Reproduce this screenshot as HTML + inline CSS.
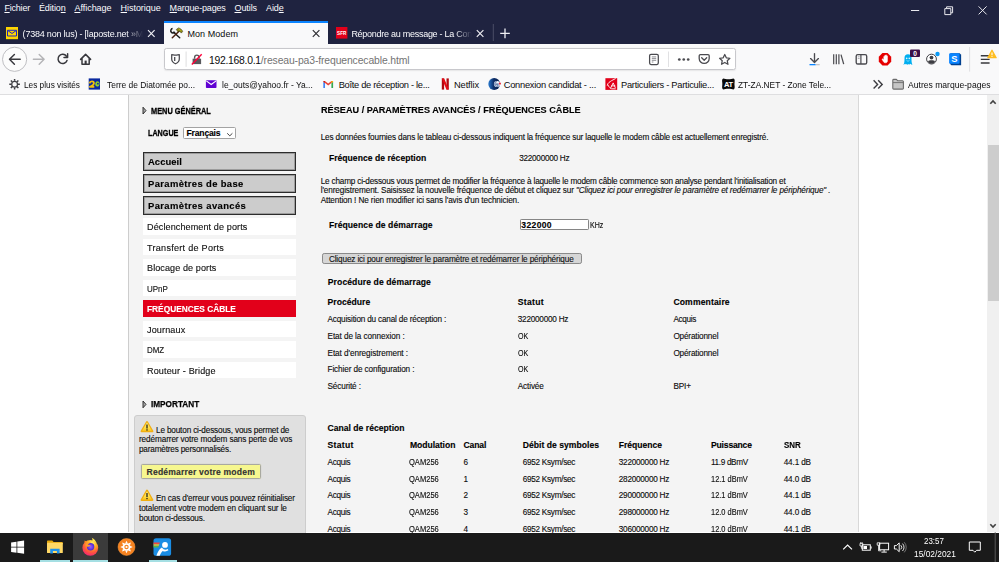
<!DOCTYPE html>
<html lang="fr">
<head>
<meta charset="utf-8">
<title>Mon Modem</title>
<style>
html,body{margin:0;padding:0;}
body{width:999px;height:562px;overflow:hidden;position:relative;background:#fff;font-family:"Liberation Sans",sans-serif;}
.a{position:absolute;}
.t{position:absolute;white-space:pre;z-index:5;}
.p{-webkit-text-stroke:.12px currentColor;}
.t u{text-decoration-thickness:.8px;text-underline-offset:1px;}
svg{position:absolute;overflow:visible;}
#chrome-top{left:0;top:0;width:999px;height:44.6px;background:#1f2340;box-sizing:border-box;border-bottom:1.8px solid #13152b;}
#tab-active{left:164px;top:21px;width:164.2px;height:24px;background:#f9f9fa;}
#tab-line{left:164px;top:21px;width:164px;height:2px;background:#0a84ff;}
#navbar{left:0;top:44px;width:999px;height:31px;background:#f9f9fa;}
#bookbar{left:0;top:75px;width:999px;height:19.2px;background:#f9f9fa;border-bottom:1px solid #dedee0;}
#urlbar{left:164.2px;top:48.3px;width:571.4px;height:22px;background:#fff;border:1.1px solid #c8c8cc;border-radius:2.5px;box-sizing:border-box;box-shadow:0 .5px 1.5px rgba(0,0,0,.08);}
#page{left:0;top:95px;width:987px;height:437px;background:#fff;overflow:hidden;}
#panel{left:128px;top:-2px;width:729px;height:460px;background:#f4f4f4;border-left:1.3px solid #cdcdcd;border-right:1.6px solid #d8d8d8;}
.mbtn{left:143px;width:153px;height:18.5px;box-sizing:border-box;background:#ccc;border:1.4px solid #2c2c2c;box-shadow:inset 0 0 0 .7px #8c8c8c;}
.mit{left:143.3px;width:152.9px;height:16.6px;background:#fff;}
#sel{left:183px;top:127.4px;width:53.4px;height:11.6px;box-sizing:border-box;background:#fff;border:1px solid #a3a3a3;border-radius:1.5px;}
#info{left:134px;top:415px;width:171.5px;height:140px;box-sizing:border-box;background:#e0e0e0;border:1px solid #cdcdcd;border-radius:3px;}
#rbtn{left:140.8px;top:464px;width:120px;height:15.4px;box-sizing:border-box;background:#f6f78f;border:1px solid #a9a9a0;border-radius:1.5px;box-shadow:0 0 0 .5px #d6d6cf;}
#inp{left:520px;top:218.8px;width:69.4px;height:10.8px;box-sizing:border-box;background:#fff;border:1px solid #858585;border-radius:1.2px;}
#sbtn{left:321.6px;top:253.2px;width:260px;height:10.6px;box-sizing:border-box;background:#d6d6d6;border:1px solid #8a8a8a;border-radius:2.2px;}
#sb{left:987px;top:95px;width:12px;height:437px;background:#f0f0f0;}
#sbth{left:987.8px;top:145px;width:11.2px;height:155.5px;background:#cdcdcd;}
#taskbar{left:0;top:532.5px;width:999px;height:29.5px;background:#1a1a1a;z-index:10;}
.ul{height:2.2px;top:27.8px;background:#a5dfe3;}
</style>
</head>
<body>
<!-- ======= Firefox chrome ======= -->
<div id="chrome-top" class="a"></div>
<div id="tab-active" class="a"></div>
<div id="tab-line" class="a"></div>
<div id="navbar" class="a"></div>
<div id="bookbar" class="a"></div>
<div id="urlbar" class="a"></div>
<!--ICONS-CHROME-->
<!-- window controls -->
<svg style="left:905px;top:0" width="94" height="21" viewBox="0 0 94 21">
  <path d="M6 10.5h8.2" stroke="#e9e9ee" stroke-width="1" fill="none"/>
  <path d="M39.8 8.6h6v6h-6z M41.6 8.6v-1.8h6v6h-1.8" stroke="#e9e9ee" stroke-width="1" fill="none"/>
  <path d="M73.6 6.4l8 8M81.6 6.4l-8 8" stroke="#e9e9ee" stroke-width="1" fill="none"/>
</svg>
<!-- tab 1 favicon: La Poste -->
<svg style="left:6.3px;top:26.9px" width="12" height="12.2" viewBox="0 0 12 12.2">
  <rect width="12" height="12.2" fill="#ffd600"/>
  <path d="M1.500 3.300h9v5.700h-9z" fill="none" stroke="#1a23c8" stroke-width="1" stroke-linejoin="round"/>
  <path d="M1.700 3.500L6 6.500l4.300-3" fill="none" stroke="#1a23c8" stroke-width="1"/>
</svg>
<!-- tab close / new tab -->
<svg style="left:0;top:21px" width="520" height="23" viewBox="0 0 520 23">
  <path d="M148 9.2l6.6 6.6M154.6 9.2l-6.6 6.6" stroke="#f0f0f4" stroke-width="1.15" fill="none"/>
  <path d="M312.8 9.2l6.6 6.6M319.4 9.2l-6.6 6.6" stroke="#2b2b30" stroke-width="1.15" fill="none"/>
  <path d="M476.8 9.2l6.6 6.6M483.4 9.2l-6.6 6.6" stroke="#f0f0f4" stroke-width="1.15" fill="none"/>
  <path d="M493.3 3v17" stroke="#4a4d66" stroke-width="1"/>
  <path d="M500.2 12.4h9.6M505 7.6v9.6" stroke="#f0f0f4" stroke-width="1.3" fill="none"/>
</svg>
<!-- tab 2 favicon: hammer + wrench -->
<svg style="left:170px;top:27.4px" width="14" height="12" viewBox="0 0 14 12">
  <path d="M3.6 5.200L9.700 10.700" stroke="#1b1b1b" stroke-width="1.500" stroke-linecap="round"/>
  <path d="M2.600 1.600a2.200 2.200 0 1 0 2.300 3.200" fill="none" stroke="#1b1b1b" stroke-width="1.500"/>
  <path d="M2.300 10.700L9 4.200" stroke="#4a2010" stroke-width="1.500" stroke-linecap="round"/>
  <path d="M6.300 2.500l2.200-1.600c1.800.5 3.400 1.700 4.200 3.400l-1.300 1.800l-1.900-1.900l-1.700.4z" fill="#8d8a14" stroke="#2e2c06" stroke-width=".55" stroke-linejoin="round"/>
  <path d="M8.600 1.900c1.200.5 2.100 1.200 2.800 2.100" stroke="#d2cc20" stroke-width=".7" fill="none"/>
</svg>
<!-- tab 3 favicon: SFR -->
<svg style="left:336px;top:27px" width="11.4" height="11.6" viewBox="0 0 11.4 11.6">
  <rect width="11.4" height="11.6" fill="#e2001a"/>
  <text x="5.7" y="7.6" font-family="Liberation Sans, sans-serif" font-size="4.6" font-weight="700" fill="#fff" text-anchor="middle">SFR</text>
</svg>
<!-- nav buttons -->
<svg style="left:0;top:44px" width="100" height="31" viewBox="0 0 100 31">
  <circle cx="14.6" cy="15.3" r="12.1" fill="#fcfcfc" stroke="#bfbfc3" stroke-width="1"/>
  <path d="M20.2 15.3H9.6M14.4 10.4l-4.9 4.9 4.9 4.9" fill="none" stroke="#38383d" stroke-width="1.45" stroke-linecap="round" stroke-linejoin="round"/>
  <path d="M33.4 15.3h10.4M39.2 10.4l4.9 4.9-4.9 4.9" fill="none" stroke="#b4b4b7" stroke-width="1.45" stroke-linecap="round" stroke-linejoin="round"/>
  <path d="M66.4 12.2a4.6 4.6 0 1 0 .6 4.3" fill="none" stroke="#38383d" stroke-width="1.5" stroke-linecap="round"/>
  <path d="M67.6 9.8v3.6h-3.6" fill="none" stroke="#38383d" stroke-width="1.5" stroke-linejoin="round" stroke-linecap="round"/>
  <path d="M80.6 15.4l5-5 5 5M82 14.6v5.6h7.2v-5.6" fill="none" stroke="#38383d" stroke-width="1.5" stroke-linejoin="round" stroke-linecap="round"/>
  <rect x="84.6" y="16.6" width="2.1" height="3.4" fill="#38383d"/>
</svg>
<!-- url bar left icons -->
<svg style="left:164px;top:44px" width="50" height="31" viewBox="0 0 50 31">
  <path d="M11.500 11.200c1.500 0 2.700-.5 3.800-.5v4.300c0 2.300-1.600 3.800-3.800 4.800c-2.200-1-3.800-2.500-3.800-4.800v-4.300c1.100 0 2.300.5 3.800.5z" fill="none" stroke="#4a4a4f" stroke-width="1.250" stroke-linejoin="round"/>
  <path d="M10.700 12.900v4.100" stroke="#4a4a4f" stroke-width="1.300"/>
  <path d="M22.100 7.500v15.300" stroke="#dededf" stroke-width="1"/>
  <path d="M28.600 20.100v-5.400h8.500v5.400z" fill="#58585c"/>
  <path d="M30.600 14.800v-1.400a2.250 2.250 0 0 1 4.500 0v1.400" fill="none" stroke="#58585c" stroke-width="1.400"/>
  <path d="M27.800 20.500l9.900-10.300" stroke="#ff0039" stroke-width="1.400"/>
</svg>
<!-- url bar right icons -->
<svg style="left:640px;top:44px" width="100" height="31" viewBox="0 0 100 31">
  <rect x="9.600" y="10.300" width="8.700" height="10.200" rx="1.400" fill="none" stroke="#4a4a4f" stroke-width="1.250"/>
  <path d="M11.800 12.900h4.400M11.800 14.600h4.400M11.800 16.300h4.400M11.800 18h1.600" stroke="#8f8f94" stroke-width="1" fill="none"/>
  <path d="M28.500 7.500v15.500" stroke="#e1e1e3" stroke-width="1"/>
  <circle cx="39.300" cy="15.500" r="1.350" fill="#4a4a4f"/><circle cx="43.750" cy="15.500" r="1.350" fill="#4a4a4f"/><circle cx="48.200" cy="15.500" r="1.350" fill="#4a4a4f"/>
  <path d="M59.200 11.800a1.200 1.200 0 0 1 1.200-1.200h7.600a1.200 1.200 0 0 1 1.200 1.200v2.600a5 5 0 0 1-10 0z" fill="none" stroke="#4a4a4f" stroke-width="1.300"/>
  <path d="M61.700 13.800l2.500 2.400 2.500-2.400" fill="none" stroke="#4a4a4f" stroke-width="1.300" stroke-linecap="round" stroke-linejoin="round"/>
  <path d="M84.750 10.500l1.550 3.300 3.600.45-2.650 2.450.7 3.600-3.200-1.800-3.200 1.800.7-3.600-2.650-2.450 3.600-.45z" fill="none" stroke="#4a4a4f" stroke-width="1.250" stroke-linejoin="round"/>
</svg>
<!-- toolbar right icons -->
<svg style="left:800px;top:44px" width="199" height="31" viewBox="0 0 199 31">
  <!-- download -->
  <path d="M14.500 9.600v8.600M10.600 14.600l3.900 3.900 3.900-3.900" fill="none" stroke="#4a4a4f" stroke-width="1.350" stroke-linecap="round" stroke-linejoin="round"/>
  <rect x="9.500" y="20" width="6.200" height="1.300" fill="#0a84ff"/><rect x="15.700" y="20" width="4" height="1.300" fill="#c4c4c7"/>
  <!-- library -->
  <path d="M33.700 10.200v10M36.300 10.200v10M38.900 10.200v10" stroke="#4a4a4f" stroke-width="1.200" fill="none"/>
  <path d="M41 10.600l2.700 9.500" stroke="#4a4a4f" stroke-width="1.250" fill="none"/>
  <!-- sidebar -->
  <rect x="56.200" y="10.600" width="10.500" height="9.400" rx="1.600" fill="none" stroke="#4a4a4f" stroke-width="1.350"/>
  <path d="M60.900 10.600v9.400" stroke="#4a4a4f" stroke-width="1.200"/>
  <path d="M57.800 12.800h1.800M57.800 14.500h1.800" stroke="#9a9a9f" stroke-width=".8"/>
  <!-- adblock hand -->
  <path d="M82.430 9.050h5.140l3.630 3.630v5.140l-3.630 3.630h-5.140l-3.630-3.630v-5.140z" fill="#e60000"/>
  <g transform="translate(85.200 15.500) scale(.86) translate(-84.300 -15.800)">
  <path d="M82.600 16.200v-3.700a.55.55 0 0 1 1.100 0v2.300v-3.400a.55.55 0 0 1 1.100 0v3.200v-3.700a.55.55 0 0 1 1.100 0v3.800v-2.800a.55.55 0 0 1 1.100 0v5.300c0 1.500-1 2.500-2.500 2.500c-1.200 0-1.800-.5-2.400-1.500l-1.400-2.500c-.3-.6.600-1 1-.5z" fill="#fff" stroke="#fff" stroke-width=".5"/>
  </g>
  <!-- ghostery -->
  <path d="M103.500 20.500c.900-1.200 1-3 1-6.800a3.500 3.500 0 0 1 7 0c0 3.800.100 5.600 1 6.800c-.900.400-1.600-.100-2.100-.700c-.400.700-1.200 1-1.800.300c-.400.700-1.300.700-1.700 0c-.600.700-1.400.400-1.800-.300c-.500.600-1.200 1.100-2.100.700z" fill="#00aef0"/>
  <circle cx="106.700" cy="14.400" r=".8" fill="#d9f3fd"/><circle cx="109.300" cy="14.400" r=".8" fill="#d9f3fd"/>
  <path d="M106.600 16.600c.8.600 2 .6 2.800 0" stroke="#d9f3fd" stroke-width=".6" fill="none"/>
  <rect x="110" y="5.500" width="10" height="7.400" rx="1" fill="#3b1049"/>
  <text x="115" y="11.500" font-family="Liberation Sans, sans-serif" font-size="6.600" font-weight="700" fill="#fff" text-anchor="middle">0</text>
  <!-- profile -->
  <circle cx="131.500" cy="15.100" r="4.900" fill="#fff" stroke="#3d3d42" stroke-width="1"/>
  <circle cx="131.500" cy="13.600" r="1.900" fill="#3d3d42"/>
  <path d="M128 17.400a3.800 3.800 0 0 0 7 0c-.6-1-1.800-1.200-3.500-1.200s-2.900.2-3.500 1.200z" fill="#3d3d42"/>
  <circle cx="137.500" cy="10" r="2.200" fill="#0a9af5"/>
  <!-- S app -->
  <path d="M150.400 9.300h9.200l1.500 1.500v10.400h-9.700l-1.500-1.500z" fill="#00408f"/>
  <rect x="149.100" y="9.200" width="10.500" height="10.500" rx="1.200" fill="#0a84ff"/>
  <text x="154.400" y="17.700" font-family="Liberation Sans, sans-serif" font-size="9.400" font-weight="700" fill="#fff" text-anchor="middle">S</text>
  <!-- separator -->
  <path d="M169.600 3v24.600" stroke="#dcdce0" stroke-width=".9"/>
  <!-- hamburger -->
  <path d="M180.800 11.700h8.800M180.800 15.350h8.800M180.800 19h8.800" stroke="#38383d" stroke-width="1.350"/>
  <!-- warning -->
  <path d="M192 6.200l4.200 7.500h-8.400z" fill="#ffbd1f" stroke="#ffbd1f" stroke-width="1.200" stroke-linejoin="round"/>
  <path d="M192 8.400v2.900" stroke="#fff" stroke-width="1.100"/><circle cx="192" cy="12.500" r=".6" fill="#fff"/>
</svg>
<!--/ICONS-CHROME-->

<!-- ======= Page ======= -->
<div id="page" class="a">
  <div id="panel" class="a"></div>
</div>
<div id="sel" class="a"></div>
<div class="a mbtn" style="top:152px"></div>
<div class="a mbtn" style="top:174px"></div>
<div class="a mbtn" style="top:196px"></div>
<div class="a mit" style="top:218px"></div>
<div class="a mit" style="top:238.5px"></div>
<div class="a mit" style="top:259px"></div>
<div class="a mit" style="top:279.5px"></div>
<div class="a mit" style="top:300px;background:#e2001a"></div>
<div class="a mit" style="top:320.5px"></div>
<div class="a mit" style="top:341px"></div>
<div class="a mit" style="top:361.5px"></div>
<div id="info" class="a"></div>
<div id="rbtn" class="a"></div>
<div id="inp" class="a"></div>
<div id="sbtn" class="a"></div>
<div id="sb" class="a"></div>
<div id="sbth" class="a"></div>
<!--ICONS-PAGE-->
<!-- bookmarks bar icons -->
<svg style="left:0;top:75px" width="999" height="19" viewBox="0 0 999 19">
  <!-- gear -->
  <g transform="translate(14.600 9.200)" stroke="#3d3d42" fill="none">
    <circle r="2.900" stroke-width="1.250"/>
    <path d="M0-3.400V-5.300M0 3.400V5.300M-3.400 0H-5.300M3.400 0H5.300M-2.400-2.400L-3.750-3.750M2.400-2.400L3.750-3.750M-2.400 2.400L-3.750 3.750M2.400 2.400L3.750 3.750" stroke-width="1.500"/>
  </g>
  <!-- "20" icon -->
  <rect x="88.700" y="3.400" width="11.300" height="11.200" fill="#0b2aa0"/>
  <path d="M89.600 8.300c.4-2.500 4.300-2.700 4.300-.1c0 1.900-2.200 2.500-3.900 3.700h4.300" fill="none" stroke="#f4c20a" stroke-width="1.900" stroke-linejoin="round"/>
  <path d="M97.400 6.200c1.500 0 2.100 1.400 2.100 2.700s-.9 2.700-2.300 2.700s-2-1.300-2-2.600s.8-2.800 2.200-2.800z" fill="#8fd128"/>
  <circle cx="97.900" cy="8.700" r=".9" fill="#0b2aa0"/>
  <!-- yahoo mail -->
  <rect x="205.900" y="5.300" width="10.600" height="7.700" rx=".8" fill="#6001d2"/>
  <path d="M206.300 5.900l4.900 3.600 4.900-3.600" fill="none" stroke="#fff" stroke-width="1.100"/>
  <!-- gmail -->
  <path d="M323.300 13v-6.200l1.700 1.300V13z" fill="#4285f4"/>
  <path d="M333.100 13v-6.200l-1.700 1.300V13z" fill="#34a853"/>
  <path d="M323.300 6.800c0-.8 1-1.200 1.600-.7l3.300 2.500 3.300-2.500c.6-.5 1.600-.1 1.600.7l-1.700 1.300-3.200 2.400-3.200-2.400z" fill="#ea4335"/>
  <path d="M331.400 8.100l1.700-1.300c0-.8-1-1.200-1.600-.7l-.1.100z" fill="#fbbc04"/>
  <path d="M325 8.100l-1.700-1.300c0-.8 1-1.200 1.600-.7l.1.100z" fill="#c5221f"/>
  <!-- netflix -->
  <path d="M441.800 3.400h2.300v11.200h-2.300z" fill="#b1060f"/>
  <path d="M446.500 3.400h2.300v11.200h-2.300z" fill="#b1060f"/>
  <path d="M441.800 3.400h2.400l4.600 11.200h-2.400z" fill="#e50914"/>
  <!-- pole emploi -->
  <defs><linearGradient id="pe" x1="0" y1="0" x2="1" y2="0"><stop offset="0" stop-color="#2a7bd0"/><stop offset=".45" stop-color="#0e2f6a"/><stop offset="1" stop-color="#0a1f4a"/></linearGradient></defs>
  <circle cx="494.200" cy="9" r="5.900" fill="url(#pe)"/>
  <circle cx="497" cy="9" r="3.100" fill="#f4f6fb"/>
  <path d="M495.300 9.100h3.400M496.800 11h1.800" stroke="#143a80" stroke-width="1"/>
  <path d="M497 6.600a2.400 2.400 0 0 0 0 4.800" stroke="#143a80" stroke-width=".6" fill="none"/>
  <circle cx="499.900" cy="8.600" r="1.100" fill="#e8283c"/>
  <!-- caisse d'epargne -->
  <rect x="605.400" y="3.200" width="11.800" height="11.700" fill="#e2001a"/>
  <path d="M607.300 10.200c.4-2.600 2.600-3.300 4.200-4.500l3.800-2M608 10.200c.8 1.800 2.200 3 3.600 3.600h3.700M610.600 13.100l2.600-5.200 2 4.600M611.600 10.900h3.300" fill="none" stroke="#fff" stroke-width=".9" stroke-linecap="round"/>
  <!-- ZT -->
  <path d="M723.400 3.600c2 1 8 1 10 0c1.400.2 1.400 2.200 1.200 3.400c-.2 1.300-.2 2.700 0 4c.2 1.200.2 3.200-1.200 3.400c-2-1-8-1-10 0c-1.400-.2-1.400-2.200-1.200-3.400c.2-1.300.2-2.700 0-4c-.2-1.200-.2-3.200 1.200-3.400z" fill="#0a0a0a"/>
  <text x="728.400" y="12" font-family="Liberation Sans, sans-serif" font-size="7.600" font-weight="700" fill="#fff" text-anchor="middle" letter-spacing="-.5">AT</text>
  <!-- chevrons -->
  <path d="M873.600 5.300l4 4.100-4 4.100M878.200 5.300l4 4.100-4 4.100" fill="none" stroke="#3d3d42" stroke-width="1.400"/>
  <!-- folder -->
  <path d="M892.800 5.300a.9.900 0 0 1 .9-.9h2.700l1.400 1.400h4.700a.9.900 0 0 1 .9.900v6.500a.9.900 0 0 1-.9.900h-8.800a.9.900 0 0 1-.9-.9z" fill="#c6c6c6" stroke="#6b6b6b" stroke-width="1.100" stroke-linejoin="round"/>
  <path d="M893 7.600h10.200" stroke="#6b6b6b" stroke-width=".9"/>
</svg>
<!-- page icons -->
<svg style="left:0;top:95px" width="999" height="437" viewBox="0 0 999 437">
  <!-- section triangles -->
  <path d="M143 12.200l3 3.400-3 3.400z" fill="#aaa" stroke="#222" stroke-width=".9" stroke-linejoin="round"/>
  <path d="M143 306l3 3.400-3 3.400z" fill="#aaa" stroke="#222" stroke-width=".9" stroke-linejoin="round"/>
  <!-- select chevron -->
  <path d="M227.200 38.300l2.600 2.500 2.600-2.500" fill="none" stroke="#444" stroke-width="1"/>
  <!-- scrollbar arrows -->
  <path d="M990.300 8.700l2.700-2.800 2.700 2.800" fill="none" stroke="#404040" stroke-width="1.600"/>
  <path d="M990.300 429.200l2.700 2.800 2.700-2.800" fill="none" stroke="#404040" stroke-width="1.600"/>
  <!-- warning icons -->
  <defs><linearGradient id="wg" x1="0" y1="0" x2="0" y2="1"><stop offset="0" stop-color="#fff48a"/><stop offset=".6" stop-color="#ffe04a"/><stop offset="1" stop-color="#f9c21a"/></linearGradient></defs>
  <g>
    <path d="M147 327l5.400 9.300h-10.800z" fill="url(#wg)" stroke="#f0ae12" stroke-width="2" stroke-linejoin="round"/>
    <path d="M147 327.600l4.900 8.500h-9.800z" fill="url(#wg)"/>
    <path d="M147 329.400v4.100" stroke="#1c1c1c" stroke-width="1.250"/><rect x="146.350" y="334.300" width="1.300" height="1.300" fill="#1c1c1c"/>
  </g>
  <g transform="translate(0 68.600)">
    <path d="M147 327l5.400 9.300h-10.800z" fill="url(#wg)" stroke="#f0ae12" stroke-width="2" stroke-linejoin="round"/>
    <path d="M147 327.600l4.900 8.500h-9.800z" fill="url(#wg)"/>
    <path d="M147 329.400v4.100" stroke="#1c1c1c" stroke-width="1.250"/><rect x="146.350" y="334.300" width="1.300" height="1.300" fill="#1c1c1c"/>
  </g>
</svg>
<!--/ICONS-PAGE-->

<span class="t" style="left:4.4px;top:3px;line-height:10px;font-size:9px;color:#fbfbfe;letter-spacing:-0.202px;"><u>F</u>ichier</span>
<span class="t" style="left:39.0px;top:3px;line-height:10px;font-size:9px;color:#fbfbfe;letter-spacing:-0.133px;">Éditio<u>n</u></span>
<span class="t" style="left:74.4px;top:3px;line-height:10px;font-size:9px;color:#fbfbfe;letter-spacing:-0.019px;"><u>A</u>ffichage</span>
<span class="t" style="left:120.6px;top:3px;line-height:10px;font-size:9px;color:#fbfbfe;letter-spacing:-0.053px;"><u>H</u>istorique</span>
<span class="t" style="left:169.6px;top:3px;line-height:10px;font-size:9px;color:#fbfbfe;letter-spacing:-0.162px;"><u>M</u>arque-pages</span>
<span class="t" style="left:234.5px;top:3px;line-height:10px;font-size:9px;color:#fbfbfe;letter-spacing:-0.086px;"><u>O</u>utils</span>
<span class="t" style="left:266.0px;top:3px;line-height:10px;font-size:9px;color:#fbfbfe;letter-spacing:-0.079px;">Aid<u>e</u></span>
<span class="t" style="left:22.6px;top:29px;line-height:10px;font-size:9px;color:#fbfbfe;letter-spacing:-0.209px;-webkit-mask-image:linear-gradient(90deg,#000 86%,transparent 100%);">(7384 non lus) - [laposte.net »M</span>
<span class="t" style="left:187.5px;top:29px;line-height:10px;font-size:9px;color:#0c0c0d;letter-spacing:0.052px;">Mon Modem</span>
<span class="t" style="left:351.4px;top:29px;line-height:10px;font-size:9px;color:#fbfbfe;letter-spacing:-0.268px;-webkit-mask-image:linear-gradient(90deg,#000 86%,transparent 100%);">Répondre au message - La Con</span>
<span class="t" style="left:208.9px;top:55px;line-height:11px;font-size:10.4px;color:#0c0c0d;letter-spacing:-0.273px;">192.168.0.1</span>
<span class="t" style="left:260.8px;top:55px;line-height:11px;font-size:10.4px;color:#737373;letter-spacing:-0.123px;">/reseau-pa3-frequencecable.html</span>
<span class="t" style="left:23.6px;top:80px;line-height:10px;font-size:9.3px;color:#0c0c0d;transform:scaleX(0.8882);transform-origin:0 50%;">Les plus visités</span>
<span class="t" style="left:107.0px;top:80px;line-height:10px;font-size:9.3px;color:#0c0c0d;transform:scaleX(0.9058);transform-origin:0 50%;">Terre de Diatomée po...</span>
<span class="t" style="left:221.7px;top:80px;line-height:10px;font-size:9.3px;color:#0c0c0d;transform:scaleX(0.9121);transform-origin:0 50%;">le_outs@yahoo.fr - Ya...</span>
<span class="t" style="left:338.7px;top:80px;line-height:10px;font-size:9.3px;color:#0c0c0d;letter-spacing:-0.305px;">Boîte de réception - le...</span>
<span class="t" style="left:454.0px;top:80px;line-height:10px;font-size:9.3px;color:#0c0c0d;letter-spacing:-0.121px;">Netflix</span>
<span class="t" style="left:503.7px;top:80px;line-height:10px;font-size:9.3px;color:#0c0c0d;letter-spacing:-0.246px;">Connexion candidat - ...</span>
<span class="t" style="left:621.0px;top:80px;line-height:10px;font-size:9.3px;color:#0c0c0d;letter-spacing:-0.258px;">Particuliers - Particulie...</span>
<span class="t" style="left:738.0px;top:80px;line-height:10px;font-size:9.3px;color:#0c0c0d;transform:scaleX(0.8986);transform-origin:0 50%;">ZT-ZA.NET - Zone Tele...</span>
<span class="t" style="left:907.5px;top:80px;line-height:10px;font-size:9.3px;color:#0c0c0d;transform:scaleX(0.9228);transform-origin:0 50%;">Autres marque-pages</span>
<span class="t p" style="left:151.0px;top:106px;line-height:10px;font-size:8.8px;font-weight:700;transform:scaleX(0.8380);transform-origin:0 50%;-webkit-text-stroke:.3px #000;">MENU GÉNÉRAL</span>
<span class="t p" style="left:148.0px;top:128px;line-height:10px;font-size:8.8px;font-weight:700;transform:scaleX(0.8182);transform-origin:0 50%;-webkit-text-stroke:.3px #000;">LANGUE</span>
<span class="t p" style="left:186.5px;top:128px;line-height:10px;font-size:8.6px;font-weight:700;letter-spacing:-0.182px;">Français</span>
<span class="t p" style="left:147.8px;top:157px;line-height:10px;font-size:8.6px;font-weight:700;letter-spacing:0.021px;transform:scaleX(1.1000);transform-origin:0 50%;">Accueil</span>
<span class="t p" style="left:147.8px;top:179px;line-height:10px;font-size:8.6px;font-weight:700;letter-spacing:0.321px;transform:scaleX(1.1000);transform-origin:0 50%;">Paramètres de base</span>
<span class="t p" style="left:147.8px;top:201px;line-height:10px;font-size:8.6px;font-weight:700;letter-spacing:0.341px;transform:scaleX(1.1000);transform-origin:0 50%;">Paramètres avancés</span>
<span class="t p" style="left:146.6px;top:222px;line-height:10px;font-size:8.4px;color:#111;letter-spacing:0.099px;transform:scaleX(1.0800);transform-origin:0 50%;">Déclenchement de ports</span>
<span class="t p" style="left:146.6px;top:243px;line-height:10px;font-size:8.4px;color:#111;letter-spacing:0.259px;transform:scaleX(1.0800);transform-origin:0 50%;">Transfert de Ports</span>
<span class="t p" style="left:146.6px;top:263px;line-height:10px;font-size:8.4px;color:#111;letter-spacing:0.087px;transform:scaleX(1.0800);transform-origin:0 50%;">Blocage de ports</span>
<span class="t p" style="left:146.6px;top:284px;line-height:10px;font-size:8.4px;color:#111;letter-spacing:0.000px;transform:scaleX(0.9547);transform-origin:0 50%;">UPnP</span>
<span class="t p" style="left:146.6px;top:304px;line-height:10px;font-size:8.4px;font-weight:700;color:#fff;letter-spacing:0.000px;transform:scaleX(0.9950);transform-origin:0 50%;">FRÉQUENCES CÂBLE</span>
<span class="t p" style="left:146.6px;top:325px;line-height:10px;font-size:8.4px;color:#111;letter-spacing:0.138px;transform:scaleX(1.0800);transform-origin:0 50%;">Journaux</span>
<span class="t p" style="left:146.6px;top:345px;line-height:10px;font-size:8.4px;color:#111;letter-spacing:0.000px;transform:scaleX(0.9481);transform-origin:0 50%;">DMZ</span>
<span class="t p" style="left:146.6px;top:366px;line-height:10px;font-size:8.4px;color:#111;letter-spacing:0.135px;transform:scaleX(1.0800);transform-origin:0 50%;">Routeur - Bridge</span>
<span class="t p" style="left:151.0px;top:399px;line-height:10px;font-size:8.8px;font-weight:700;transform:scaleX(0.9334);transform-origin:0 50%;-webkit-text-stroke:.25px #000;">IMPORTANT</span>
<span class="t p" style="left:156.0px;top:426px;line-height:9px;font-size:8.2px;color:#0c0c0c;letter-spacing:-0.154px;">Le bouton ci-dessous, vous permet de</span>
<span class="t p" style="left:139.0px;top:435px;line-height:9px;font-size:8.2px;color:#0c0c0c;letter-spacing:-0.104px;">redémarrer votre modem sans perte de vos</span>
<span class="t p" style="left:139.0px;top:445px;line-height:9px;font-size:8.2px;color:#0c0c0c;letter-spacing:-0.179px;">paramètres personnalisés.</span>
<span class="t p" style="left:146.6px;top:467px;line-height:10px;font-size:8.6px;font-weight:700;color:#333;letter-spacing:0.172px;">Redémarrer votre modem</span>
<span class="t p" style="left:156.0px;top:494px;line-height:9px;font-size:8.2px;color:#0c0c0c;letter-spacing:-0.149px;">En cas d&#x27;erreur vous pouvez réinitialiser</span>
<span class="t p" style="left:139.0px;top:504px;line-height:9px;font-size:8.2px;color:#0c0c0c;letter-spacing:-0.114px;">totalement votre modem en cliquant sur le</span>
<span class="t p" style="left:139.0px;top:514px;line-height:9px;font-size:8.2px;color:#0c0c0c;letter-spacing:-0.163px;">bouton ci-dessous.</span>
<span class="t p" style="left:320.7px;top:105px;line-height:10px;font-size:8.6px;font-weight:700;letter-spacing:0.018px;transform:scaleX(1.0600);transform-origin:0 50%;">RÉSEAU / PARAMÈTRES AVANCÉS / FRÉQUENCES CÂBLE</span>
<span class="t p" style="left:320.7px;top:133px;line-height:9px;font-size:8.2px;color:#0c0c0c;letter-spacing:-0.156px;">Les données fournies dans le tableau ci-dessous indiquent la fréquence sur laquelle le modem câble est actuellement enregistré.</span>
<span class="t p" style="left:328.9px;top:153px;line-height:10px;font-size:8.6px;font-weight:700;letter-spacing:0.020px;">Fréquence de réception</span>
<span class="t p" style="left:519.2px;top:154px;line-height:9px;font-size:8.2px;color:#0c0c0c;letter-spacing:-0.264px;">322000000 Hz</span>
<span class="t p" style="left:320.7px;top:177px;line-height:9px;font-size:8.2px;color:#0c0c0c;letter-spacing:-0.188px;">Le champ ci-dessous vous permet de modifier la fréquence à laquelle le modem câble commence son analyse pendant l&#x27;initialisation et</span>
<span class="t p" style="left:320.7px;top:186px;line-height:9px;font-size:8.2px;color:#0c0c0c;letter-spacing:-0.120px;">l&#x27;enregistrement. Saisissez la nouvelle fréquence de début et cliquez sur </span>
<span class="t p" style="left:576.0px;top:186px;line-height:9px;font-size:8.2px;font-style:italic;color:#0c0c0c;letter-spacing:-0.132px;">&quot;Cliquez ici pour enregistrer le paramètre et redémarrer le périphérique&quot; .</span>
<span class="t p" style="left:320.7px;top:196px;line-height:9px;font-size:8.2px;color:#0c0c0c;letter-spacing:-0.117px;">Attention ! Ne rien modifier ici sans l&#x27;avis d&#x27;un technicien.</span>
<span class="t p" style="left:328.9px;top:220px;line-height:10px;font-size:8.6px;font-weight:700;letter-spacing:0.072px;">Fréquence de démarrage</span>
<span class="t p" style="left:521.3px;top:220px;line-height:10px;font-size:8.6px;font-weight:700;letter-spacing:0.335px;">322000</span>
<span class="t p" style="left:590.3px;top:221px;line-height:9px;font-size:8.2px;color:#0c0c0c;transform:scaleX(0.8598);transform-origin:0 50%;">KHz</span>
<span class="t p" style="left:328.9px;top:255px;line-height:9px;font-size:8.2px;color:#111;letter-spacing:-0.130px;">Cliquez ici pour enregistrer le paramètre et redémarrer le périphérique</span>
<span class="t p" style="left:327.8px;top:277px;line-height:10px;font-size:8.6px;font-weight:700;letter-spacing:0.088px;">Procédure de démarrage</span>
<span class="t p" style="left:327.5px;top:297px;line-height:10px;font-size:8.6px;font-weight:700;letter-spacing:0.032px;">Procédure</span>
<span class="t p" style="left:517.8px;top:297px;line-height:10px;font-size:8.6px;font-weight:700;letter-spacing:0.307px;">Statut</span>
<span class="t p" style="left:673.4px;top:297px;line-height:10px;font-size:8.6px;font-weight:700;letter-spacing:0.134px;">Commentaire</span>
<span class="t p" style="left:327.5px;top:315px;line-height:9px;font-size:8.2px;color:#0c0c0c;letter-spacing:-0.178px;">Acquisition du canal de réception :</span>
<span class="t p" style="left:517.8px;top:315px;line-height:9px;font-size:8.2px;color:#0c0c0c;letter-spacing:-0.239px;">322000000 Hz</span>
<span class="t p" style="left:673.4px;top:315px;line-height:9px;font-size:8.2px;color:#0c0c0c;letter-spacing:-0.330px;">Acquis</span>
<span class="t p" style="left:327.5px;top:332px;line-height:9px;font-size:8.2px;color:#0c0c0c;letter-spacing:-0.075px;">Etat de la connexion :</span>
<span class="t p" style="left:517.8px;top:332px;line-height:9px;font-size:8.2px;color:#0c0c0c;transform:scaleX(0.8612);transform-origin:0 50%;">OK</span>
<span class="t p" style="left:673.4px;top:332px;line-height:9px;font-size:8.2px;color:#0c0c0c;letter-spacing:-0.166px;">Opérationnel</span>
<span class="t p" style="left:327.5px;top:349px;line-height:9px;font-size:8.2px;color:#0c0c0c;letter-spacing:-0.071px;">Etat d&#x27;enregistrement :</span>
<span class="t p" style="left:517.8px;top:349px;line-height:9px;font-size:8.2px;color:#0c0c0c;transform:scaleX(0.8612);transform-origin:0 50%;">OK</span>
<span class="t p" style="left:673.4px;top:349px;line-height:9px;font-size:8.2px;color:#0c0c0c;letter-spacing:-0.166px;">Opérationnel</span>
<span class="t p" style="left:327.5px;top:365px;line-height:9px;font-size:8.2px;color:#0c0c0c;letter-spacing:-0.106px;">Fichier de configuration :</span>
<span class="t p" style="left:517.8px;top:365px;line-height:9px;font-size:8.2px;color:#0c0c0c;transform:scaleX(0.8612);transform-origin:0 50%;">OK</span>
<span class="t p" style="left:327.5px;top:382px;line-height:9px;font-size:8.2px;color:#0c0c0c;letter-spacing:-0.129px;">Sécurité :</span>
<span class="t p" style="left:517.8px;top:382px;line-height:9px;font-size:8.2px;color:#0c0c0c;letter-spacing:-0.137px;">Activée</span>
<span class="t p" style="left:673.4px;top:382px;line-height:9px;font-size:8.2px;color:#0c0c0c;letter-spacing:-0.096px;">BPI+</span>
<span class="t p" style="left:327.5px;top:423px;line-height:10px;font-size:8.6px;font-weight:700;letter-spacing:0.012px;">Canal de réception</span>
<span class="t p" style="left:327.5px;top:440px;line-height:10px;font-size:8.6px;font-weight:700;letter-spacing:0.323px;">Statut</span>
<span class="t p" style="left:409.9px;top:440px;line-height:10px;font-size:8.6px;font-weight:700;letter-spacing:-0.033px;">Modulation</span>
<span class="t p" style="left:463.5px;top:440px;line-height:10px;font-size:8.6px;font-weight:700;letter-spacing:-0.141px;">Canal</span>
<span class="t p" style="left:522.7px;top:440px;line-height:10px;font-size:8.6px;font-weight:700;letter-spacing:0.021px;">Débit de symboles</span>
<span class="t p" style="left:618.8px;top:440px;line-height:10px;font-size:8.6px;font-weight:700;letter-spacing:-0.030px;">Fréquence</span>
<span class="t p" style="left:711.0px;top:440px;line-height:10px;font-size:8.6px;font-weight:700;letter-spacing:-0.191px;">Puissance</span>
<span class="t p" style="left:783.7px;top:440px;line-height:10px;font-size:8.6px;font-weight:700;transform:scaleX(0.9253);transform-origin:0 50%;">SNR</span>
<span class="t p" style="left:327.5px;top:458px;line-height:9px;font-size:8.2px;color:#0c0c0c;letter-spacing:-0.296px;">Acquis</span>
<span class="t p" style="left:409.2px;top:458px;line-height:9px;font-size:8.2px;color:#0c0c0c;transform:scaleX(0.9222);transform-origin:0 50%;">QAM256</span>
<span class="t p" style="left:463.5px;top:458px;line-height:9px;font-size:8.2px;color:#0c0c0c;letter-spacing:-0.062px;">6</span>
<span class="t p" style="left:522.7px;top:458px;line-height:9px;font-size:8.2px;color:#0c0c0c;letter-spacing:-0.268px;">6952 Ksym/sec</span>
<span class="t p" style="left:618.8px;top:458px;line-height:9px;font-size:8.2px;color:#0c0c0c;letter-spacing:-0.255px;">322000000 Hz</span>
<span class="t p" style="left:711.0px;top:458px;line-height:9px;font-size:8.2px;color:#0c0c0c;letter-spacing:-0.345px;">11.9 dBmV</span>
<span class="t p" style="left:783.7px;top:458px;line-height:9px;font-size:8.2px;color:#0c0c0c;letter-spacing:-0.148px;">44.1 dB</span>
<span class="t p" style="left:327.5px;top:475px;line-height:9px;font-size:8.2px;color:#0c0c0c;letter-spacing:-0.296px;">Acquis</span>
<span class="t p" style="left:409.2px;top:475px;line-height:9px;font-size:8.2px;color:#0c0c0c;transform:scaleX(0.9222);transform-origin:0 50%;">QAM256</span>
<span class="t p" style="left:463.5px;top:475px;line-height:9px;font-size:8.2px;color:#0c0c0c;letter-spacing:-0.062px;">1</span>
<span class="t p" style="left:522.7px;top:475px;line-height:9px;font-size:8.2px;color:#0c0c0c;letter-spacing:-0.268px;">6952 Ksym/sec</span>
<span class="t p" style="left:618.8px;top:475px;line-height:9px;font-size:8.2px;color:#0c0c0c;letter-spacing:-0.255px;">282000000 Hz</span>
<span class="t p" style="left:711.0px;top:475px;line-height:9px;font-size:8.2px;color:#0c0c0c;transform:scaleX(0.9083);transform-origin:0 50%;">12.1 dBmV</span>
<span class="t p" style="left:783.7px;top:475px;line-height:9px;font-size:8.2px;color:#0c0c0c;letter-spacing:-0.148px;">44.0 dB</span>
<span class="t p" style="left:327.5px;top:491px;line-height:9px;font-size:8.2px;color:#0c0c0c;letter-spacing:-0.296px;">Acquis</span>
<span class="t p" style="left:409.2px;top:491px;line-height:9px;font-size:8.2px;color:#0c0c0c;transform:scaleX(0.9222);transform-origin:0 50%;">QAM256</span>
<span class="t p" style="left:463.5px;top:491px;line-height:9px;font-size:8.2px;color:#0c0c0c;letter-spacing:-0.062px;">2</span>
<span class="t p" style="left:522.7px;top:491px;line-height:9px;font-size:8.2px;color:#0c0c0c;letter-spacing:-0.268px;">6952 Ksym/sec</span>
<span class="t p" style="left:618.8px;top:491px;line-height:9px;font-size:8.2px;color:#0c0c0c;letter-spacing:-0.255px;">290000000 Hz</span>
<span class="t p" style="left:711.0px;top:491px;line-height:9px;font-size:8.2px;color:#0c0c0c;transform:scaleX(0.9083);transform-origin:0 50%;">12.1 dBmV</span>
<span class="t p" style="left:783.7px;top:491px;line-height:9px;font-size:8.2px;color:#0c0c0c;letter-spacing:-0.148px;">44.1 dB</span>
<span class="t p" style="left:327.5px;top:508px;line-height:9px;font-size:8.2px;color:#0c0c0c;letter-spacing:-0.296px;">Acquis</span>
<span class="t p" style="left:409.2px;top:508px;line-height:9px;font-size:8.2px;color:#0c0c0c;transform:scaleX(0.9222);transform-origin:0 50%;">QAM256</span>
<span class="t p" style="left:463.5px;top:508px;line-height:9px;font-size:8.2px;color:#0c0c0c;letter-spacing:-0.062px;">3</span>
<span class="t p" style="left:522.7px;top:508px;line-height:9px;font-size:8.2px;color:#0c0c0c;letter-spacing:-0.268px;">6952 Ksym/sec</span>
<span class="t p" style="left:618.8px;top:508px;line-height:9px;font-size:8.2px;color:#0c0c0c;letter-spacing:-0.255px;">298000000 Hz</span>
<span class="t p" style="left:711.0px;top:508px;line-height:9px;font-size:8.2px;color:#0c0c0c;transform:scaleX(0.9083);transform-origin:0 50%;">12.0 dBmV</span>
<span class="t p" style="left:783.7px;top:508px;line-height:9px;font-size:8.2px;color:#0c0c0c;letter-spacing:-0.148px;">44.0 dB</span>
<span class="t p" style="left:327.5px;top:525px;line-height:9px;font-size:8.2px;color:#0c0c0c;letter-spacing:-0.296px;">Acquis</span>
<span class="t p" style="left:409.2px;top:525px;line-height:9px;font-size:8.2px;color:#0c0c0c;transform:scaleX(0.9222);transform-origin:0 50%;">QAM256</span>
<span class="t p" style="left:463.5px;top:525px;line-height:9px;font-size:8.2px;color:#0c0c0c;letter-spacing:-0.062px;">4</span>
<span class="t p" style="left:522.7px;top:525px;line-height:9px;font-size:8.2px;color:#0c0c0c;letter-spacing:-0.268px;">6952 Ksym/sec</span>
<span class="t p" style="left:618.8px;top:525px;line-height:9px;font-size:8.2px;color:#0c0c0c;letter-spacing:-0.255px;">306000000 Hz</span>
<span class="t p" style="left:711.0px;top:525px;line-height:9px;font-size:8.2px;color:#0c0c0c;transform:scaleX(0.9083);transform-origin:0 50%;">12.0 dBmV</span>
<span class="t p" style="left:783.7px;top:525px;line-height:9px;font-size:8.2px;color:#0c0c0c;letter-spacing:-0.148px;">44.1 dB</span>
<span class="t" style="left:924.3px;top:536px;line-height:10px;font-size:9.3px;color:#fff;transform:scaleX(0.8553);transform-origin:0 50%;z-index:20;">23:57</span>
<span class="t" style="left:913.5px;top:549px;line-height:10px;font-size:9.3px;color:#fff;transform:scaleX(0.9005);transform-origin:0 50%;z-index:20;">15/02/2021</span>

<!-- ======= Windows taskbar ======= -->
<div id="taskbar" class="a">
  <div class="a" style="left:73px;top:0;width:35px;height:30px;background:#3b3b3b"></div>
  <div class="a ul" style="left:40px;width:30px"></div>
  <div class="a ul" style="left:73px;width:35px"></div>
  <div class="a ul" style="left:148.6px;width:28.6px"></div>
  <!--ICONS-TASK-->
<svg style="left:0;top:-.5px" width="999" height="30" viewBox="0 0 999 30">
  <!-- windows logo -->
  <path d="M11.100 10.400l5.400-.750v5.100h-5.400zM17.300 9.550l6.800-.950v6.150h-6.800zM11.100 15.550h5.400v5.100l-5.400-.750zM17.300 15.550h6.800v6.150l-6.800-.950z" fill="#fff"/>
  <!-- explorer -->
  <path d="M47 9.300a.7.700 0 0 1 .7-.7h4.600l1.300 1.400h8.500a.7.700 0 0 1 .7.700v1.600H47z" fill="#e8a90c"/>
  <rect x="47" y="10.700" width="15.800" height="10.300" rx=".6" fill="#ffd866"/>
  <path d="M50.200 21.500v-4.800h9.400v4.800h-2.700v-2.600h-4v2.600z" fill="#2192ea"/>
  <!-- firefox -->
  <defs>
    <radialGradient id="ff1" cx=".62" cy=".2" r=".95"><stop offset="0" stop-color="#fff36b"/><stop offset=".3" stop-color="#ffb224"/><stop offset=".6" stop-color="#ff5a3a"/><stop offset=".85" stop-color="#f52a6c"/><stop offset="1" stop-color="#d81a8a"/></radialGradient>
    <radialGradient id="ff2" cx=".5" cy=".5" r=".6"><stop offset="0" stop-color="#9a5cff"/><stop offset=".7" stop-color="#5b2fd6"/><stop offset="1" stop-color="#3a1fa8"/></radialGradient>
  </defs>
  <circle cx="90.300" cy="15.800" r="7.900" fill="url(#ff1)"/>
  <path d="M91.800 5.800c2.300 1 4.400 3.300 4.600 5.600c-1.300-1.700-2.700-2.400-4-2.200c.3-1.200 0-2.400-.6-3.400z" fill="#ffe44a"/>
  <path d="M84.200 8.800c.9-.2 1.900.2 2.500 1l-1.600 1.400z" fill="#ff8a1e"/>
  <circle cx="90.600" cy="14.800" r="3.700" fill="url(#ff2)"/>
  <path d="M85.600 12.200c1.400-1.600 3.600-2.400 5.600-1.600c-1.700.2-2.800 1-3.100 2.100c1 .2 2 .2 2.700.9c-1 1.200-3 1.600-4.400.6c-.7-.5-1-1.300-.8-2z" fill="#ff9a2e"/>
  <!-- orange app -->
  <circle cx="126.500" cy="15" r="8.500" fill="#f58220"/>
  <circle cx="126.500" cy="15" r="8.500" fill="none" stroke="#ff9d3d" stroke-width=".8" opacity=".6"/>
  <g transform="translate(126.500 15)" fill="#fff">
    <path d="M0-6.200L1.300-3.600h-2.600zM0 6.200L1.300 3.600h-2.600zM-6.200 0L-3.600-1.300v2.600zM6.200 0L3.600-1.300v2.600zM-4.400-4.400L-1.650-3.500-3.500-1.650zM4.400-4.400L1.650-3.500 3.500-1.650zM-4.400 4.400L-1.650 3.500-3.500 1.650zM4.400 4.400L1.650 3.500 3.500 1.650z"/>
    <circle r="3.800"/><circle r="2.200" fill="#f58220"/><circle r="1.100"/>
  </g>
  <!-- blue app -->
  <rect x="153.500" y="6.200" width="17.600" height="17.600" rx="2.600" fill="#1a8de4"/>
  <path d="M153.500 10.400h6.400l-.5 1.500h-5.900z" fill="#f2453d"/>
  <path d="M153.500 12.200h5.800l-.5 1.500h-5.300z" fill="#f5c21b"/>
  <path d="M153.500 14h5.200l-.5 1.500h-4.700z" fill="#54b948"/>
  <circle cx="165" cy="12.900" r="2.900" fill="#fff"/>
  <path d="M156.400 23.800c1.200-3.400 2.600-6.400 5.400-8.200l1.800 1.700c1.200.6 2.800.6 4-.2l.9 1.200c-1.700 1.300-4 1.400-5.800.6c-1.400 1.300-2.300 3-3 4.900z" fill="#fff"/>
  <!-- tray chevron -->
  <path d="M843.200 17.400l4.400-4.400 4.400 4.400" fill="none" stroke="#fff" stroke-width="1.150"/>
  <!-- battery -->
  <rect x="862.300" y="12.800" width="8" height="5.400" fill="none" stroke="#fff" stroke-width="1"/>
  <rect x="870.600" y="14.400" width="1" height="2.200" fill="#fff"/>
  <rect x="863.400" y="14" width="3.600" height="3" fill="#fff"/>
  <path d="M860 11.400h2.800v2.600h-2.800zM860.700 11.400v-1.200M862.100 11.400v-1.200M861.400 14v2.300h1.400" fill="none" stroke="#fff" stroke-width=".8"/>
  <!-- network -->
  <rect x="879.600" y="11.200" width="9" height="6.600" fill="none" stroke="#fff" stroke-width="1"/>
  <path d="M884.100 17.800v2M881.400 20.100h5.400" stroke="#fff" stroke-width="1"/>
  <path d="M877.200 10.800h2.600v2.400h-2.600zM878.500 13.200v5.600h2.600" fill="none" stroke="#fff" stroke-width=".8"/>
  <!-- volume -->
  <path d="M894.400 13.600h2l2.800-2.700v8.800l-2.800-2.700h-2z" fill="none" stroke="#fff" stroke-width=".95" stroke-linejoin="round"/>
  <path d="M900.800 13.200a3 3 0 0 1 0 4.200M902.500 11.600a5.300 5.300 0 0 1 0 7.400" fill="none" stroke="#fff" stroke-width=".9"/>
  <path d="M904.200 10.200a7.400 7.400 0 0 1 0 10.200" fill="none" stroke="#8a8a8a" stroke-width=".8"/>
  <!-- notification -->
  <path d="M969.300 10h11v8.300h-3.700l-1.800 1.900-1.800-1.900h-3.700z" fill="none" stroke="#fff" stroke-width="1" stroke-linejoin="miter"/>
  <!-- show desktop -->
  <path d="M995.200 0v30" stroke="#6a6a6a" stroke-width=".8"/>
</svg>
<!--/ICONS-TASK-->
</div>
</body>
</html>
